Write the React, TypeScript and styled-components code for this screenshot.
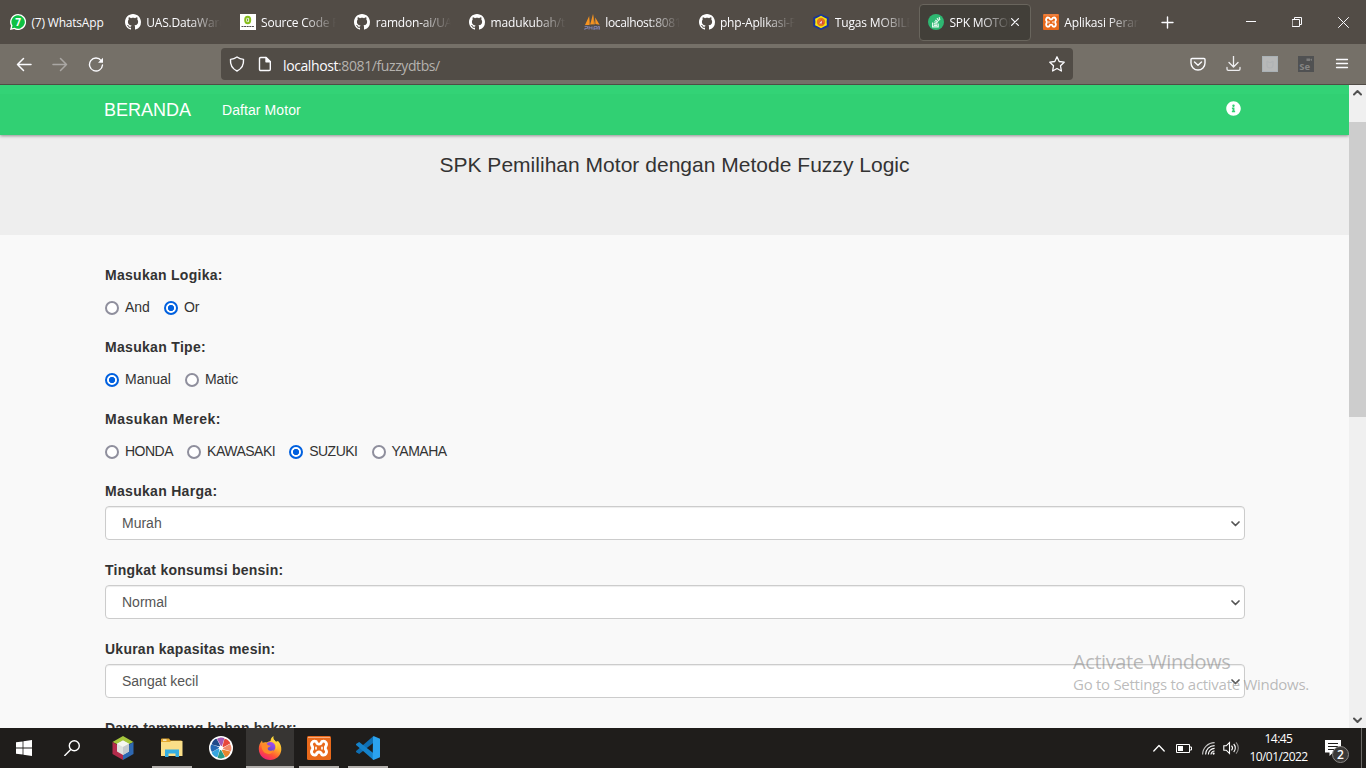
import React from "react";
import styled, { createGlobalStyle, css } from "styled-components";
import { FaInfoCircle } from "react-icons/fa";

const ui = `"Open Sans", "Noto Sans", sans-serif`;
const arial = `"Liberation Sans", Arial, sans-serif`;

const Global = createGlobalStyle`
  * { box-sizing: border-box; }
  body { margin: 0; overflow: hidden; }
  svg { display: block; flex: none; }
`;

const Screen = styled.div`
  width: 1366px;
  height: 768px;
  display: flex;
  flex-direction: column;
  overflow: hidden;
  position: relative;
  background: #f9f9f9;
`;

/* ---------- browser chrome ---------- */

const TabStrip = styled.div`
  height: 44px;
  flex: none;
  display: flex;
  align-items: center;
  background: #524c46;
  color: #fbfbfe;
  font: 12px/16px ${ui};
  padding-left: 1px;
`;

const TabBox = styled.div<{ $active?: boolean }>`
  flex: none;
  width: 112px;
  height: 37px;
  margin-right: 2.75px;
  padding-left: 8px;
  display: flex;
  align-items: center;
  gap: 6px;
  border: 1px solid transparent;
  border-radius: 4px;
  ${(p) =>
    p.$active &&
    css`
      background: #423f39;
      border-color: #69655d;
    `}
`;

const TabTitle = styled.span<{ $width: number; $spacing: number; $fade: boolean }>`
  width: ${(p) => p.$width}px;
  flex: none;
  padding-top: 2px;
  margin-left: -0.5px;
  white-space: nowrap;
  letter-spacing: ${(p) => p.$spacing}px;
  ${(p) =>
    p.$fade &&
    css`
      mask-image: linear-gradient(to left, transparent 0, #000 32px);
    `}
`;

const NewTab = styled.div`
  width: 36px;
  margin-left: 1px;
  display: flex;
  justify-content: center;
`;

const WindowButtons = styled.div`
  margin-left: auto;
  display: flex;
`;

const WindowButton = styled.div`
  width: 46px;
  display: flex;
  justify-content: center;
`;

const Toolbar = styled.div`
  height: 41px;
  flex: none;
  display: flex;
  align-items: center;
  background: #757068;
  border-bottom: 1px solid #514c46;
  color: #fbfbfe;
`;

const NavButtons = styled.div`
  width: 221px;
  display: flex;
  gap: 20px;
  padding-left: 16px;
`;

const AddressBar = styled.div`
  width: 852px;
  height: 32px;
  border-radius: 4px;
  background: #514c46;
  display: flex;
  align-items: center;
  gap: 13px;
  padding: 0 8px;
  font: 14px/20px ${ui};
`;

const Address = styled.span`
  margin: 3px 0 0 -2px;
  flex: 1;
  color: #b5b2ae;
  letter-spacing: -0.4px;
  b {
    font-weight: 400;
    color: #fbfbfe;
  }
`;

const ToolbarActions = styled.div`
  margin-left: auto;
  display: flex;
  gap: 20px;
  padding-right: 16px;
`;

/* ---------- web page ---------- */

const Viewport = styled.div`
  height: 643px;
  flex: none;
  display: flex;
  overflow: hidden;
`;

const Page = styled.main`
  width: 1349px;
  height: 643px;
  overflow: hidden;
  font: 14px/20px ${arial};
  color: #333;
  display: flex;
  flex-direction: column;
`;

const Navbar = styled.nav`
  height: 50px;
  flex: none;
  display: flex;
  align-items: center;
  padding: 0 108px 0 104px;
  background: linear-gradient(#33d376 9px, #31d073 9px);
  color: #fff;
  box-shadow: 0 1px 3px rgba(0, 0, 0, 0.4);
  position: relative;
`;

const Brand = styled.span`
  font-size: 18px;
  width: 118px;
`;

const NavLink = styled.span`
  flex: 1;
  letter-spacing: 0.08px;
`;

const InfoLink = styled.span`
  padding-bottom: 3px;
`;

const Banner = styled.header`
  height: 100px;
  flex: none;
  background: #eee;
  text-align: center;
`;

const Title = styled.h1`
  margin: 18px 0 0;
  font-size: 21px;
  line-height: 24px;
  font-weight: 400;
  letter-spacing: 0.02px;
`;

const Form = styled.form`
  padding: 30px 104px 0 105px;
`;

const Group = styled.div`
  margin-bottom: 20px;
`;

const Label = styled.div<{ $spacing: number }>`
  font-weight: 700;
  margin-bottom: 5px;
  letter-spacing: ${(p) => p.$spacing}px;
`;

const RadioRow = styled.div<{ $tight?: boolean }>`
  display: flex;
  gap: 14px;
  padding-top: 7px;
  letter-spacing: ${(p) => (p.$tight ? -0.5 : 0)}px;
`;

const Option = styled.label`
  display: flex;
  gap: 6px;
`;

const Dot = styled.span<{ $on: boolean }>`
  width: 14px;
  height: 14px;
  margin-top: 4px;
  border-radius: 50%;
  border: 2px solid ${(p) => (p.$on ? "#0060df" : "#8f8f9d")};
  background: ${(p) => (p.$on ? "radial-gradient(circle, #0060df 2.8px, #fff 3.4px)" : "#fff")};
`;

const SelectBox = styled.div`
  height: 34px;
  display: flex;
  align-items: center;
  justify-content: space-between;
  padding: 0 4.5px 0 16px;
  border: 1px solid #ccc;
  border-radius: 4px;
  background: #fff;
  box-shadow: inset 0 1px 1px rgba(0, 0, 0, 0.075);
  color: #555;
`;

const Scrollbar = styled.div`
  width: 17px;
  background: #f0f0f0;
  display: flex;
  flex-direction: column;
  align-items: center;
`;

const ScrollArrow = styled.div`
  height: 37px;
  padding-top: 4px;
`;

const Thumb = styled.div`
  width: 17px;
  height: 295px;
  background: #cdcdcd;
`;

const ScrollEnd = styled.div`
  margin-top: auto;
  padding-bottom: 4px;
`;

const Watermark = styled.div`
  position: absolute;
  left: 1073px;
  top: 649px;
  width: 270px;
  color: rgba(130, 130, 130, 0.55);
  font-family: ${ui};
  white-space: nowrap;
`;

const WatermarkTitle = styled.div`
  font-size: 20px;
  line-height: 26px;
  letter-spacing: -0.42px;
`;

const WatermarkText = styled.div`
  font-size: 15px;
  line-height: 20px;
  letter-spacing: -0.28px;
  margin-top: -1px;
`;

/* ---------- taskbar ---------- */

const Taskbar = styled.footer`
  height: 40px;
  flex: none;
  display: flex;
  background: #1f1d1b;
  color: #fff;
`;

const TaskButton = styled.div<{ $state?: "open" | "focus"; $gap?: number }>`
  width: 48px;
  margin-right: ${(p) => p.$gap ?? 1}px;
  display: flex;
  align-items: center;
  justify-content: center;
  background:
    ${(p) =>
      p.$state
        ? `linear-gradient(#b3b0ad, #b3b0ad) bottom / ${p.$state === "focus" ? 48 : 40}px 2px no-repeat,`
        : ""}
    ${(p) => (p.$state === "focus" ? "linear-gradient(#373533, #373533)" : "none")};
`;

const Tray = styled.div`
  margin-left: auto;
  display: flex;
  align-items: center;
`;

const TrayIcon = styled.div<{ $width: number }>`
  width: ${(p) => p.$width}px;
  display: flex;
  justify-content: center;
`;

const Clock = styled.div`
  width: 73px;
  text-align: center;
  font: 12px/18px ${ui};
  letter-spacing: -0.55px;
  padding-bottom: 0;
`;

const Notification = styled.div`
  width: 46px;
  padding-left: 10px;
  position: relative;
`;

const Badge = styled.span`
  position: absolute;
  left: 17px;
  top: 6px;
  width: 17px;
  height: 17px;
  border: 1px solid #8a8886;
  border-radius: 50%;
  background: #3b3937;
  font: 600 12px/15px ${ui};
  text-align: center;
`;

const DesktopEdge = styled.div`
  width: 5px;
  height: 40px;
  border-left: 1px solid #6b6967;
`;

/* ---------- drawings ---------- */

const Line = ({ d, w = 16, h = 16, sw = 1.3, o = 1, color = "currentColor" }: {
  d: string; w?: number; h?: number; sw?: number; o?: number; color?: string;
}) => (
  <svg width={w} height={h} viewBox={`0 0 ${w} ${h}`} fill="none" stroke={color} strokeWidth={sw}
    strokeLinecap="round" strokeLinejoin="round" opacity={o}>
    <path d={d} />
  </svg>
);

const GitHub = () => (
  <svg width="16" height="16" viewBox="0 0 16 16" fill="#fff">
    <path d="M8 0C3.58 0 0 3.58 0 8c0 3.54 2.29 6.53 5.47 7.59.4.07.55-.17.55-.38 0-.19-.01-.82-.01-1.49-2.01.37-2.53-.49-2.69-.94-.09-.23-.48-.94-.82-1.13-.28-.15-.68-.52-.01-.53.63-.01 1.08.58 1.23.82.72 1.21 1.87.87 2.33.66.07-.52.28-.87.51-1.07-1.78-.2-3.64-.89-3.64-3.95 0-.87.31-1.59.82-2.15-.08-.2-.36-1.02.08-2.12 0 0 .67-.21 2.2.82.64-.18 1.32-.27 2-.27s1.36.09 2 .27c1.53-1.04 2.2-.82 2.2-.82.44 1.1.16 1.92.08 2.12.51.56.82 1.27.82 2.15 0 3.07-1.87 3.75-3.65 3.95.29.25.54.73.54 1.48 0 1.07-.01 1.93-.01 2.2 0 .21.15.46.55.38A8.01 8.01 0 0 0 16 8c0-4.42-3.58-8-8-8z" />
  </svg>
);

const WhatsApp = () => (
  <svg width="16" height="16" viewBox="0 0 16 16">
    <path d="M8 0a8 8 0 1 1-3.800 15L0 16l1-4.200A8 8 0 0 1 8 0z" fill="#fff" />
    <path d="M8 1.300a6.700 6.700 0 1 1-3.400 12.400l-2.800.6.7-2.700A6.700 6.700 0 0 1 8 1.300z" fill="#0dc143" />
    <text x="8" y="11.600" fontSize="10" fontWeight="700" fill="#fff" textAnchor="middle" fontFamily="Open Sans">7</text>
  </svg>
);

const SourceCode = () => (
  <svg width="16" height="16" viewBox="0 0 16 16">
    <path d="M0 0h16v16H0z" fill="#fff" />
    <ellipse cx="7.700" cy="6" rx="2.500" ry="3.200" fill="none" stroke="#86bd1c" strokeWidth="2" />
    <path d="M7.700 4.600v2.800" stroke="#5b8f12" strokeWidth="1" />
    <path d="M1.500 12.500h13" stroke="#4c4c4c" strokeWidth="1.200" strokeDasharray="2 .6" />
  </svg>
);

const PhpMyAdmin = () => (
  <svg width="16" height="16" viewBox="0 0 16 16">
    <path d="M5.200 2 1 11h4.400zM9 0 6.200 10.600l4.400-.4zM11.200 3.600l.2 6.500 4.200.6z" fill="#f79420" />
    <path d="M9 0l2 10.200-1.400.1zM5.400 3l1 7.500-1.200.2z" fill="#c9822f" />
    <path d="M.6 12.400h3v2H.9V16M5 12v3.600M8 12.400v3.200M5 13.800h3M10 16v-3.400h3v2.200h-3M14 15.600v-3h1.600v3" fill="none" stroke="#7f81ad" strokeWidth="1" />
  </svg>
);

const Campus = () => (
  <svg width="16" height="16" viewBox="0 0 16 16">
    <path d="M8 0 15.800 3.600v8.800L8 16 .2 12.400V3.600z" fill="#17349b" />
    <path d="M8 1.700 11.200 3.600 13.900 4.800 13.600 8l.3 3.200-2.700 1.200L8 14.300 4.800 12.400 2.100 11.200 2.400 8 2.100 4.800 4.800 3.600z" fill="#f5e50f" />
    <circle cx="8" cy="8" r="4.200" fill="#e4761b" />
    <path d="M8.400 5 11 10H5.600z" fill="#d5423a" />
    <path d="M6 9.400 8.800 6.400v3z" fill="#f7dfd8" />
  </svg>
);

const SpkMotor = () => (
  <svg width="16" height="16" viewBox="0 0 16 16">
    <circle cx="8" cy="8" r="8" fill="#2eb872" />
    <path d="M4.600 8.500v4.300h5.600V9.400M5.800 11.400h3.400M5.800 9.700l3.400.3M6.200 7.800l3.200 1M7.300 5.900l2.700 2M9 4.200l1.900 2.700M11.200 3.200l.6 3" fill="none" stroke="#e3f7ec" strokeWidth="1.200" />
  </svg>
);

const Xampp = ({ size }: { size: number }) => (
  <svg width={size} height={size} viewBox="0 0 24 24">
    <rect width="24" height="24" rx="1.500" fill="#e8691b" />
    <path d="M1 1.500h22" stroke="#f4ab80" strokeWidth="1" />
    <path d="M9.200 5.600C5.500 4 3 8 5.600 11v2.200C3 16.200 5.500 20.200 9.200 18.600c.6-2 1.300-2.600 2.800-2.600s2.200.6 2.800 2.600c3.700 1.600 6.200-2.400 3.600-5.400V11c2.600-3 .1-7-3.600-5.400-.6 2-1.300 2.600-2.800 2.600s-2.200-.6-2.800-2.600z"
      fill="none" stroke="#fff" strokeWidth="2.800" strokeLinejoin="round" />
    <path d="M9 11.200v1.800M15 11.200v1.800" stroke="#fff" strokeWidth="1.600" strokeLinecap="round" />
  </svg>
);

const Reload = () => (
  <svg width="16" height="16" viewBox="0 0 16 16" fill="none" stroke="currentColor" strokeWidth="1.400" strokeLinecap="round">
    <path d="M13.200 4.600A6.500 6.500 0 1 0 14.500 9" />
    <path d="M15 1.700v5h-5z" fill="currentColor" stroke="none" />
  </svg>
);

const PageIcon = () => (
  <svg width="14" height="16" viewBox="0 0 14 16" fill="none" stroke="currentColor" strokeWidth="1.400" strokeLinejoin="round">
    <path d="M2.700 1.500H8l4.300 4.300v7.500a1.200 1.200 0 0 1-1.200 1.200H2.700a1.200 1.200 0 0 1-1.200-1.200V2.700a1.200 1.200 0 0 1 1.200-1.200z" />
    <path d="M8 1.500v4.300h4.300z" fill="currentColor" />
  </svg>
);

const PrivateExt = () => (
  <svg width="16" height="16" viewBox="0 0 16 16">
    <rect x=".5" y=".5" width="15" height="15" fill="#b7b8b8" stroke="#a9b1b5" />
    <path d="M5 5v4a3 3 0 0 0 6 0V5M5 5l2 1.500h2L11 5" fill="none" stroke="#b0b3b5" strokeWidth="1.200" />
  </svg>
);

const Selenium = () => (
  <svg width="16" height="16" viewBox="0 0 16 16">
    <rect width="16" height="16" fill="#505152" />
    <path d="M8.500 2.500h3.500V5H8.500zM12 3.800 14 2.500V5z" fill="#7c7c7b" />
    <text x="1.200" y="13.800" fontSize="9.500" fontWeight="700" fill="#858584" fontFamily="Open Sans">Se</text>
  </svg>
);

const WindowsLogo = () => (
  <svg width="16" height="16" viewBox="0 0 16 16" fill="#fff">
    <path d="M0 2.300 6.600 1.400v6.200H0zM7.400 1.300 16 0v7.600H7.400zM0 8.400h6.600v6.200L0 13.700zM7.400 8.400H16V16l-8.600-1.300z" />
  </svg>
);

const NetBeans = () => (
  <svg width="24" height="24" viewBox="0 0 24 24">
    <path d="M12 0 22.500 6 12 11 1.500 6z" fill="#a5c73c" />
    <path d="M1.500 6 12 12v12L1.500 18z" fill="#b32b4b" />
    <path d="M22.500 6v12L12 24V12z" fill="#2e68b1" />
    <path d="m12 4.500 6 3.200v7.800L12 19l-6-3.500V7.700z" fill="#dfe2df" />
    <path d="m12 4.500 6 3.200-6 3.300-6-3.300z" fill="#f5f6f1" />
    <path d="m12 11 6-3.300v7.800L12 19z" fill="#c6cbcf" />
  </svg>
);

const Explorer = () => (
  <svg width="22" height="20" viewBox="0 0 22 20">
    <path d="M0 1.500A1 1 0 0 1 1 .5h7l1.500 2H20a1 1 0 0 1 1 1V6H0z" fill="#e4a92f" />
    <path d="M2 1.500h3.500v1.200H2z" fill="#fff" />
    <path d="M0 4h9l1-1h11.500v15H0z" fill="#fbdf88" />
    <path d="M4 11.500h14V19h-3.500v-3.500h-7V19H4z" fill="#35aee2" />
  </svg>
);

const wheel = ["#a45bb5", "#e8483d", "#f08a6a", "#e9852d", "#2b9a84", "#37a6e0", "#2468b4", "#20498a"];
const Wheel = () => (
  <svg width="24" height="24" viewBox="0 0 24 24">
    <circle cx="12" cy="12" r="12" fill="#fff" />
    {wheel.map((c, i) => (
      <path key={c} d="M12 10 8 3C10 1.300 13.800 1 15.400 2.300 14.600 4.500 14.400 7 12.800 10z" fill={c} transform={`rotate(${i * 45} 12 12)`} />
    ))}
    <circle cx="12" cy="12" r="2" fill="#fff" />
  </svg>
);

const Firefox = () => (
  <svg width="24" height="24" viewBox="0 0 24 24">
    <defs>
      <linearGradient id="flame" x1=".8" y1="0" x2=".25" y2="1">
        <stop offset="0" stopColor="#fff04a" />
        <stop offset=".4" stopColor="#ffb12a" />
        <stop offset=".7" stopColor="#ff5634" />
        <stop offset="1" stopColor="#f0197b" />
      </linearGradient>
      <linearGradient id="globe" x1=".7" y1="0" x2=".3" y2="1">
        <stop offset="0" stopColor="#a64bf4" />
        <stop offset="1" stopColor="#5748c7" />
      </linearGradient>
    </defs>
    <path d="M15.500 0c-.6 3 .8 4 2.300 5.800L20 5c2.600 2.800 3.500 5.500 3.300 9-.5 5.800-5.200 10-11.100 10C6 24 1 19.400.8 13.200.7 9.800 1.800 7 4 4.500l.6 2.300C6 6 7.500 6 9 6.400c1.500-.9 2.400-1 3.500-1.400.2-2.200 1.200-3.900 3-5z" fill="url(#flame)" />
    <circle cx="12.300" cy="11" r="5" fill="url(#globe)" />
    <path d="M3.600 8.500c2-1.500 3.900-1.200 5.600-.8 0 1.500 1.200 1.600 3.500 1.800-.3 1.500-3 1.400-3 3.300 0 2.300 4.400 2.600 6 .4-.5 3.300-3 5.200-6.300 4.600-4-.7-6.300-5-5.800-9.300z" fill="#ff8a2a" />
    <path d="M14 5.200c3.300 1.300 5 4 4.300 8 1.300-1.500 1.300-4.300.3-6.300L16.500 4z" fill="#ffd23c" />
  </svg>
);

const VsCode = () => (
  <svg width="24" height="24" viewBox="0 0 24 24">
    <path d="M17.500 0v6.700L3.200 18 .4 16.300a1 1 0 0 1 0-1.500z" fill="#0f6fb3" />
    <path d="M17.500 24v-6.700L3.200 6 .4 7.700a1 1 0 0 0 0 1.500z" fill="#1583cb" />
    <path d="M17.500 0 24 2.800v18.400L17.500 24c-.6-.4-1-1-.8-2L17 2c0-.9.100-1.400.5-2z" fill="#2ba3ef" />
  </svg>
);

const Wifi = () => (
  <svg width="13" height="13" viewBox="0 0 13 13" fill="none" stroke="#fff" strokeWidth="1.100">
    <path d="M.6 12.600A12 12 0 0 1 12.600.6" opacity=".75" />
    <path d="M3.600 12.600a9 9 0 0 1 9-9M6.400 12.600a6.200 6.200 0 0 1 6.200-6.200" />
    <path d="M9 12.600a3.600 3.600 0 0 1 3.600-3.600" />
    <circle cx="11.600" cy="11.600" r="1.100" fill="#fff" stroke="none" />
  </svg>
);

const Volume = () => (
  <svg width="16" height="14" viewBox="0 0 16 14" fill="none" stroke="#fff" strokeWidth="1.100">
    <path d="M.8 4.800h2.400L6.500 1.500v11L3.200 9.200H.8z" />
    <path d="M8.500 4.700a3.400 3.400 0 0 1 0 4.600M10.700 3a5.800 5.800 0 0 1 0 8" />
    <path d="M13 1.300a8.200 8.200 0 0 1 0 11.400" opacity=".5" />
  </svg>
);

const Battery = () => (
  <svg width="16" height="9" viewBox="0 0 16 9">
    <path d="M.5.500h13v8H.5zM14 3h1.500v3H14" fill="none" stroke="#fff" />
    <path d="M2 2h5v5H2z" fill="#fff" />
  </svg>
);

const Note = () => (
  <svg width="16" height="17" viewBox="0 0 16 17">
    <path d="M0 0h16v12.500H8L4.500 16v-3.500H0z" fill="#fff" />
    <path d="M3 3.500h10M3 6.500h10M3 9.500h7" stroke="#1f1d1b" />
  </svg>
);

/* ---------- content ---------- */

const git = <GitHub />;

const tabs: { icon: React.ReactNode; title: string; spacing?: number; active?: boolean; full?: boolean }[] = [
  { icon: <WhatsApp />, title: "(7) WhatsApp", full: true },
  { icon: git, title: "UAS.DataWare" },
  { icon: <SourceCode />, title: "Source Code P" },
  { icon: git, title: "ramdon-ai/UA" },
  { icon: git, title: "madukubah/t", spacing: -0.15 },
  { icon: <PhpMyAdmin />, title: "localhost:8081", spacing: -0.35 },
  { icon: git, title: "php-Aplikasi-P", spacing: -0.22 },
  { icon: <Campus />, title: "Tugas MOBILE", spacing: -0.15 },
  { icon: <SpkMotor />, title: "SPK MOTOR", spacing: -0.25, active: true },
  { icon: <Xampp size={16} />, title: "Aplikasi Peran", spacing: -0.15 },
];

const radios = [
  { label: "Masukan Logika:", spacing: 0.28, options: ["And", "Or"], value: "Or" },
  { label: "Masukan Tipe:", spacing: 0.31, options: ["Manual", "Matic"], value: "Manual" },
  { label: "Masukan Merek:", spacing: 0.5, tight: true, options: ["HONDA", "KAWASAKI", "SUZUKI", "YAMAHA"], value: "SUZUKI" },
];

const selects = [
  { label: "Masukan Harga:", spacing: 0.3, value: "Murah" },
  { label: "Tingkat konsumsi bensin:", spacing: 0.25, value: "Normal" },
  { label: "Ukuran kapasitas mesin:", spacing: 0.24, value: "Sangat kecil" },
  { label: "Daya tampung bahan bakar:", spacing: 0.17, value: "Normal" },
];

export default function App() {
  return (
    <Screen>
      <Global />
      <TabStrip>
        {tabs.map((t) => (
          <TabBox key={t.title} $active={t.active}>
            {t.icon}
            <TabTitle $width={t.active ? 61 : 75} $spacing={t.spacing ?? -0.2} $fade={!t.full}>{t.title}</TabTitle>
            {t.active && <NarrowClose><Line w={8} h={8} sw={1.2} d="M.6.600 7.400 7.400M7.400.600.600 7.400" /></NarrowClose>}
          </TabBox>
        ))}
        <NewTab><Line w={13} h={13} sw={1.4} d="M6.500 1v11M1 6.500h11" /></NewTab>
        <WindowButtons>
          <WindowButton><Line w={10} h={10} sw={1} d="M0 4.500h10" /></WindowButton>
          <WindowButton><Line w={10} h={10} sw={1} d="M.5 2.500h7v7h-7zM2.500 2.500v-2h7v7h-2" /></WindowButton>
          <WindowButton><Line w={11} h={11} sw={1} d="M.5.500l10 10M10.500.500l-10 10" /></WindowButton>
        </WindowButtons>
      </TabStrip>
      <Toolbar>
        <NavButtons>
          <Line sw={1.5} d="M15 8.500H1.500M7.500 2.500l-6 6 6 6" />
          <Line sw={1.5} o={0.4} d="M1 8.500h13.500M8.500 2.500l6 6-6 6" />
          <Reload />
        </NavButtons>
        <AddressBar>
          <Line sw={1.4} d="M8 1c2 1.500 4 2.200 6.500 2.400.4 5-1.500 9.300-6.500 11.600C3 12.700 1.100 8.400 1.500 3.400 4 3.200 6 2.500 8 1z" />
          <PageIcon />
          <Address><b>localhost</b>:8081/fuzzydtbs/</Address>
          <Line sw={1.3} d="m8 .8 2.200 4.700 5 .7-3.700 3.600.9 5.200L8 12.500 3.600 15l.9-5.200L.8 6.200l5-.7z" />
        </AddressBar>
        <ToolbarActions>
          <Line sw={1.4} d="M2 2.500h12a1 1 0 0 1 1 1V7A7 7 0 0 1 1 7V3.500a1 1 0 0 1 1-1zM4.500 6 8 9.200 11.500 6" />
          <Line sw={1.3} o={0.9} d="M7.500 0v10.500M3 6.500 7.500 11 12 6.500M1 11.500V13a1.300 1.300 0 0 0 1.300 1.300h10.400A1.300 1.300 0 0 0 14 13v-1.500" />
          <PrivateExt />
          <Selenium />
          <Line sw={1.3} d="M2.500 3.500h11M2.500 7.500h11M2.500 11.500h11" />
        </ToolbarActions>
      </Toolbar>

      <Viewport>
        <Page>
          <Navbar>
            <Brand>BERANDA</Brand>
            <NavLink>Daftar Motor</NavLink>
            <InfoLink><FaInfoCircle size={15} /></InfoLink>
          </Navbar>
          <Banner>
            <Title>SPK Pemilihan Motor dengan Metode Fuzzy Logic</Title>
          </Banner>
          <Form>
            {radios.map((r) => (
              <Group key={r.label}>
                <Label $spacing={r.spacing}>{r.label}</Label>
                <RadioRow $tight={r.tight}>
                  {r.options.map((o) => (
                    <Option key={o}><Dot $on={o === r.value} />{o}</Option>
                  ))}
                </RadioRow>
              </Group>
            ))}
            {selects.map((s) => (
              <Group key={s.label}>
                <Label $spacing={s.spacing}>{s.label}</Label>
                <SelectBox>
                  {s.value}
                  <Line w={9} h={7} sw={1.7} d="M1 2l3.500 3.500L8 2" />
                </SelectBox>
              </Group>
            ))}
          </Form>
        </Page>
        <Scrollbar>
          <ScrollArrow><Line w={9} h={7} sw={2} color="#505050" d="M1 5.500l3.500-3.500L8 5.500" /></ScrollArrow>
          <Thumb />
          <ScrollEnd><Line w={9} h={7} sw={2} color="#505050" d="M1 1.500l3.500 3.500L8 1.500" /></ScrollEnd>
        </Scrollbar>
      </Viewport>

      <Taskbar>
        <TaskButton $gap={0}><WindowsLogo /></TaskButton>
        <TaskButton $gap={3}><Line sw={1.4} d="M.8 15.500l5.700-5.700M15.300 5.800a5 5 0 1 1-10 0 5 5 0 0 1 10 0z" /></TaskButton>
        <TaskButton><NetBeans /></TaskButton>
        <TaskButton $state="open"><Explorer /></TaskButton>
        <TaskButton><Wheel /></TaskButton>
        <TaskButton $state="focus"><Firefox /></TaskButton>
        <TaskButton $state="open"><Xampp size={24} /></TaskButton>
        <TaskButton $state="open"><VsCode /></TaskButton>
        <Tray>
          <TrayIcon $width={24}><Line w={12} h={8} sw={1.3} d="M.8 7 6 1.500 11.200 7" /></TrayIcon>
          <TrayIcon $width={25}><Battery /></TrayIcon>
          <TrayIcon $width={24}><Wifi /></TrayIcon>
          <TrayIcon $width={22}><Volume /></TrayIcon>
          <Clock>14:45<br />10/01/2022</Clock>
          <Notification><Note /><Badge>2</Badge></Notification>
          <DesktopEdge />
        </Tray>
      </Taskbar>

      <Watermark>
        <WatermarkTitle>Activate Windows</WatermarkTitle>
        <WatermarkText>Go to Settings to activate Windows.</WatermarkText>
      </Watermark>
    </Screen>
  );
}

const NarrowClose = styled.span`
  margin-left: -6px;
`;
